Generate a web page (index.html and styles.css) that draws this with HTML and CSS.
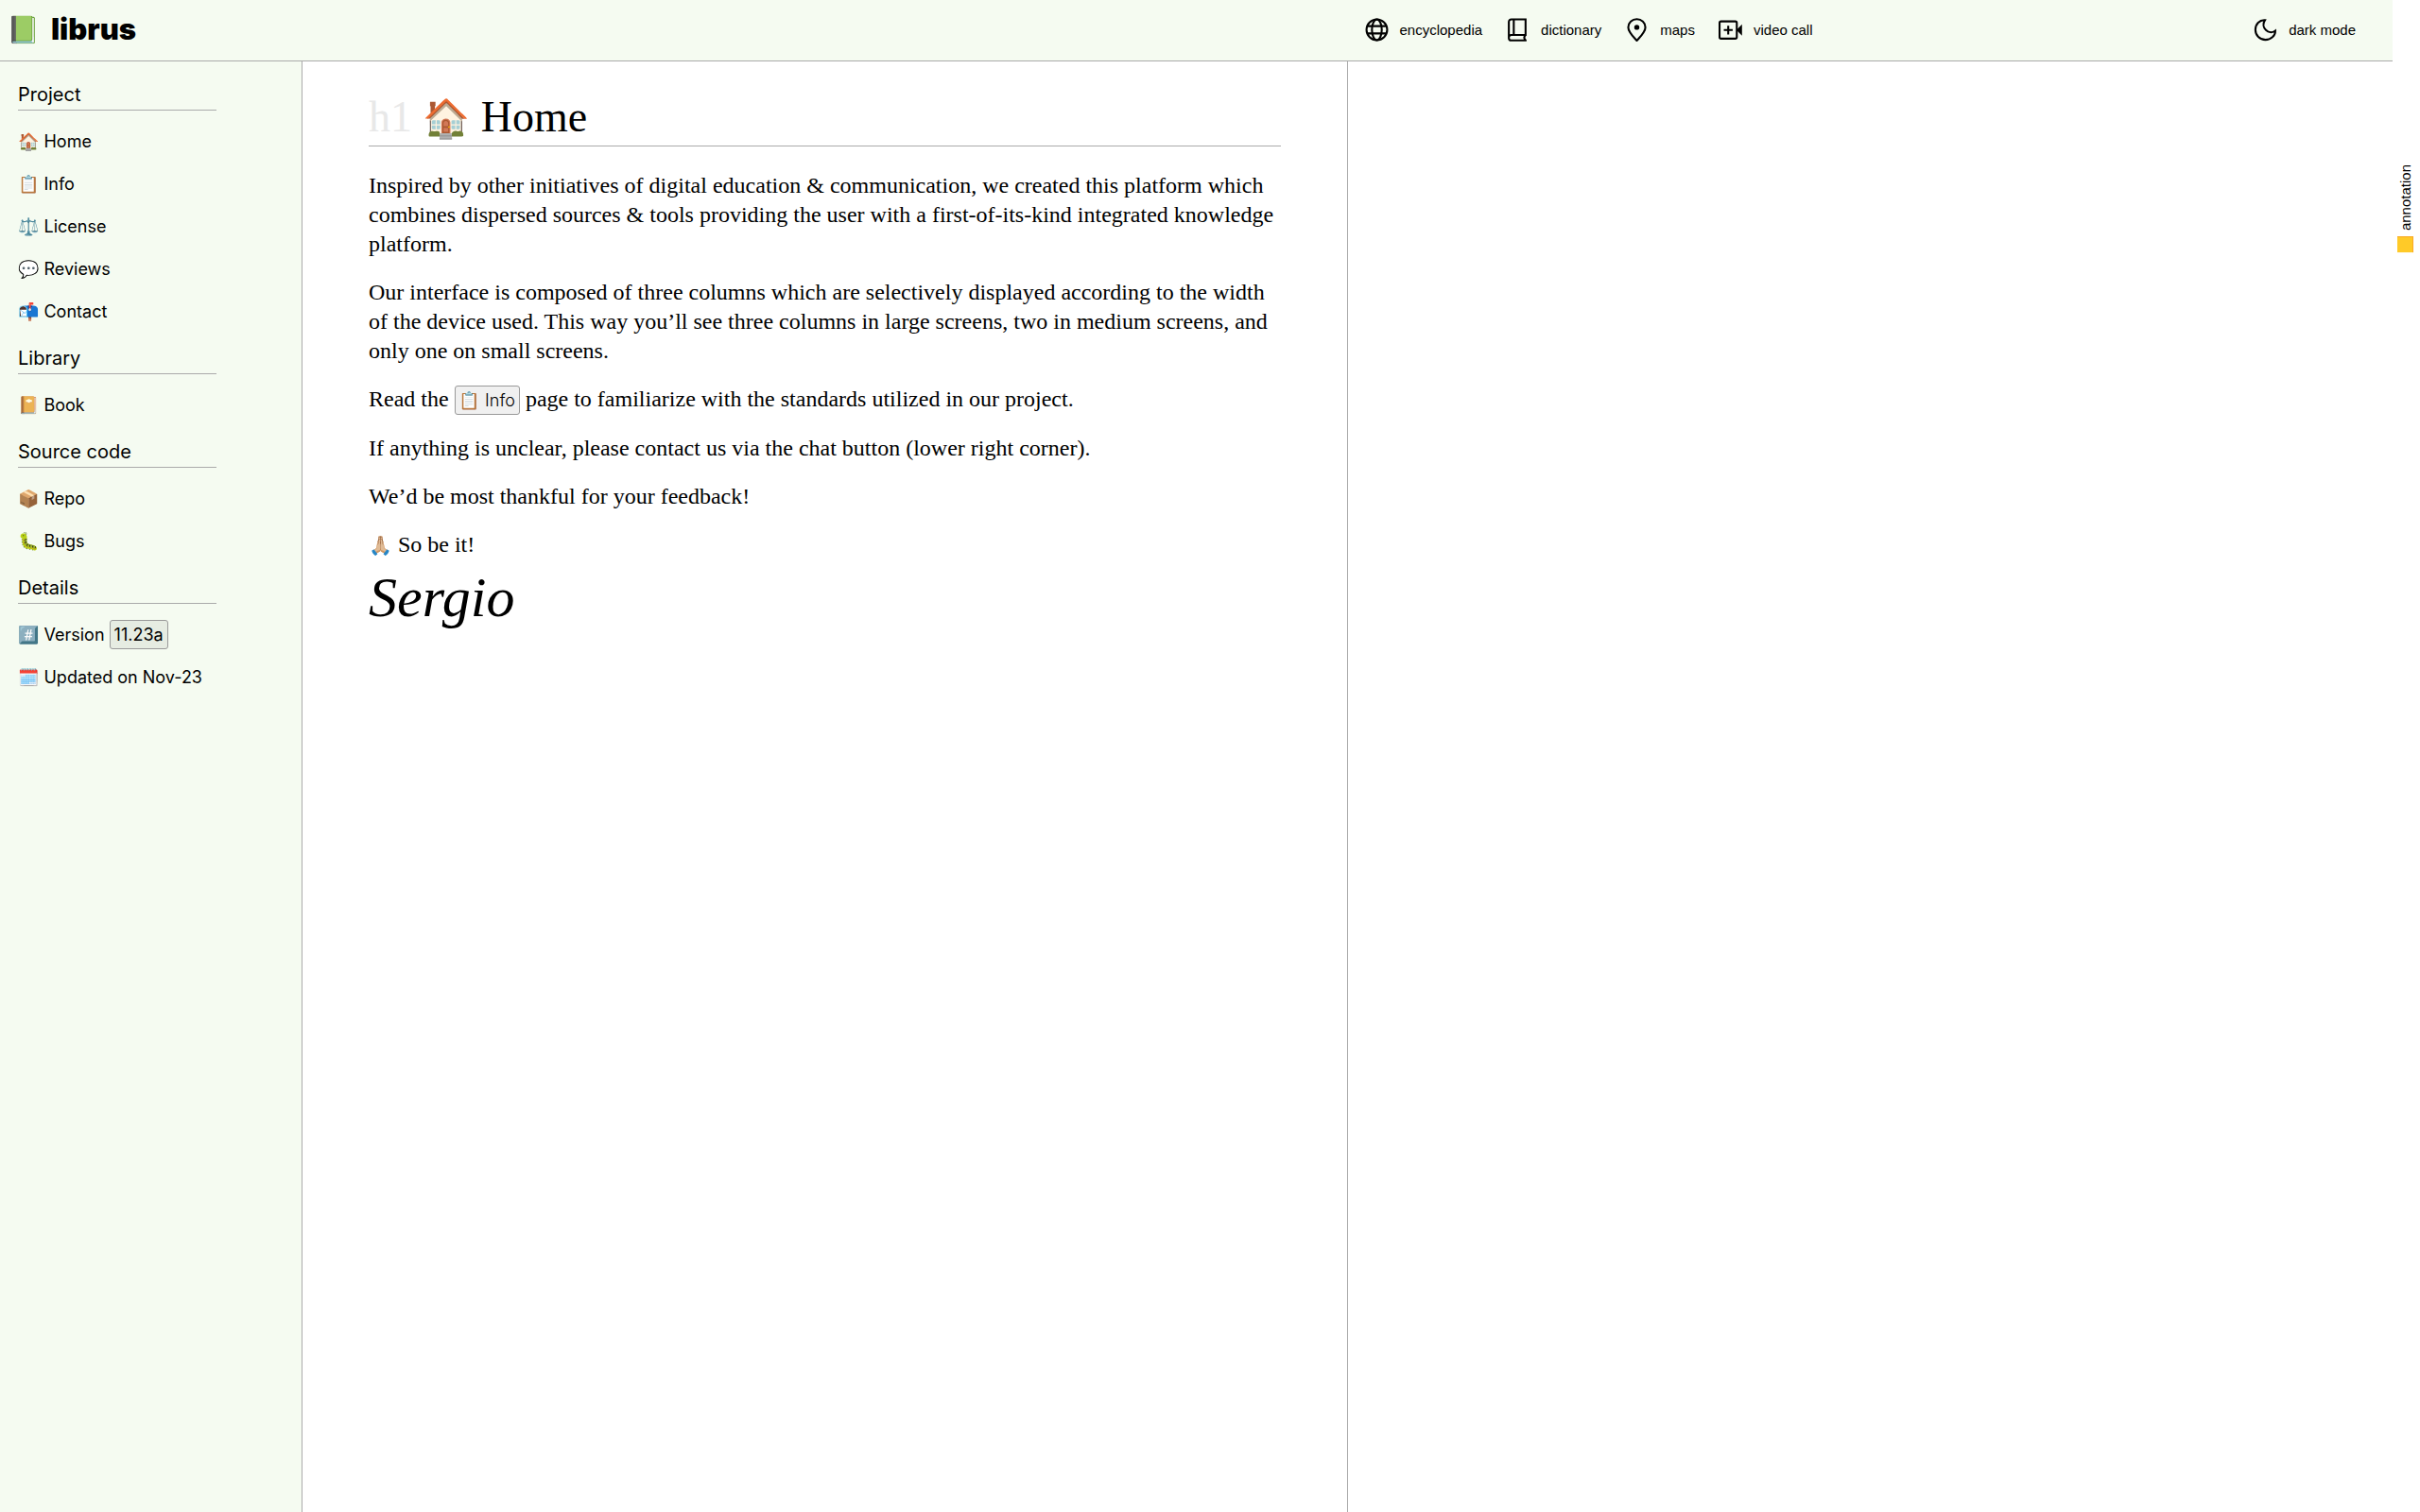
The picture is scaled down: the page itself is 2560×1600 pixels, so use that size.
FILE: index.html
```html
<!DOCTYPE html>
<html lang="en">
<head>
<meta charset="utf-8">
<meta name="viewport" content="width=device-width, initial-scale=1">
<title>librus</title>
<link rel="stylesheet" href="styles.css">
</head>
<body>
<div class="page">
  <header class="topbar">
    <a class="brand" href="#"><span class="brand-icon">📗</span><span class="brand-name">librus</span></a>
    <div class="tools">
      <nav class="tool-list" aria-label="Tools">
        <button class="tool" type="button">
          <svg class="icon" viewBox="0 0 24 24"><circle cx="12" cy="12" r="10.5"/><ellipse cx="12" cy="12" rx="5" ry="10.5"/><path d="M2.5 8.3h19M2.5 15.7h19"/></svg>
          encyclopedia
        </button>
        <button class="tool" type="button">
          <svg class="icon" viewBox="0 0 24 24"><path d="M21 22.8H5.5a2.5 2.5 0 0 1-2.5-2.5V4a2.5 2.5 0 0 1 2.5-2.5H20v15.8H5.5a2.6 2.6 0 0 0-2.5 2.6M8 1.5v15.8M20 17.3c-1.6 1.6-1.6 3.8 0 5.5"/></svg>
          dictionary
        </button>
        <button class="tool" type="button">
          <svg class="icon" viewBox="0 0 24 24"><path d="M12 23C7.500 18 3.300 14 3.300 9.500a8.700 8.300 0 0 1 17.400 0C20.700 14 16.500 18 12 23z"/><circle class="fill" cx="12" cy="9.500" r="1.600"/></svg>
          maps
        </button>
        <button class="tool" type="button">
          <svg class="icon" viewBox="0 0 24 24"><rect x="1" y="3.500" width="17.500" height="17.500" rx="1.500"/><path d="M9.800 7.800v9M5.300 12.300h9"/><path class="fill" d="M19.500 12.300 22.800 9v6.600z"/></svg>
          video call
        </button>
      </nav>
      <button class="tool" type="button">
        <svg class="icon" viewBox="0 0 24 24"><path d="M11.500 2.200C6 1.800 1.800 6.500 1.800 12c0 5.700 4.500 10.200 10.200 10.200 5.500 0 10.200-4.200 10-9.200C15.500 18 6.500 9.500 11.500 2.200z"/></svg>
        dark mode
      </button>
    </div>
  </header>

  <nav class="sidebar" aria-label="Site">
    <h2>Project</h2>
    <ul>
      <li><a href="#">🏠 Home</a></li>
      <li><a href="#">📋 Info</a></li>
      <li><a href="#">⚖️ License</a></li>
      <li><a href="#">💬 Reviews</a></li>
      <li><a href="#">📬 Contact</a></li>
    </ul>
    <h2>Library</h2>
    <ul>
      <li><a href="#">📔 Book</a></li>
    </ul>
    <h2>Source code</h2>
    <ul>
      <li><a href="#">📦 Repo</a></li>
      <li><a href="#">🐛 Bugs</a></li>
    </ul>
    <h2>Details</h2>
    <ul>
      <li>#️⃣ Version <span class="chip">11.23a</span></li>
      <li>🗓️ Updated on Nov-23</li>
    </ul>
  </nav>

  <main class="content">
    <h1><span class="level">h1</span> <span class="title-emoji">🏠</span> Home</h1>
    <p>Inspired by other initiatives of digital education &amp; communication, we created this platform which combines dispersed sources &amp; tools providing the user with a first-of-its-kind integrated knowledge platform.</p>
    <p>Our interface is composed of three columns which are selectively displayed according to the width of the device used. This way you’ll see three columns in large screens, two in medium screens, and only one on small screens.</p>
    <p>Read the <a class="chip" href="#">📋 Info</a> page to familiarize with the standards utilized in our project.</p>
    <p>If anything is unclear, please contact us via the chat button (lower right corner).</p>
    <p>We’d be most thankful for your feedback!</p>
    <p><span class="text-emoji">🙏🏼</span> So be it!</p>
    <div class="signature">Sergio</div>
  </main>

  <section class="reader" aria-label="Reader"></section>

  <aside class="gutter">
    <button class="annotation" type="button"><span class="note"></span>annotation</button>
  </aside>
</div>
</body>
</html>
```
FILE: styles.css
```css
* { box-sizing: border-box; }

body {
  margin: 0;
  background: #fff;
  color: #000;
  font-family: Inter, "Noto Color Emoji", sans-serif;
  font-size: 18px;
}

a { color: inherit; text-decoration: none; }

button {
  padding: 0;
  border: 0;
  background: none;
  color: inherit;
  font: 15px "Liberation Sans", sans-serif;
}

.page {
  display: grid;
  grid-template-areas:
    "top top top gutter"
    "side content reader gutter";
  grid-template-columns: 320px 1fr 1fr 29px;
  grid-template-rows: 65px 1fr;
  min-height: 100vh;
}

.topbar {
  grid-area: top;
  display: grid;
  grid-template-columns: subgrid;
  align-items: center;
  padding-bottom: 2px;
  background: #f5fbf1;
  border-bottom: 1px solid #aaa;
}

.brand {
  grid-column: 1 / 3;
  display: flex;
  align-items: center;
  gap: 12px;
  padding-left: 7px;
}

.brand-icon { font-size: 28px; line-height: 40px; }
.brand-name { font: 900 31px/40px Inter, sans-serif; }

.tools {
  display: flex;
  justify-content: space-between;
  padding: 0 39px 0 18px;
}

.tool-list { display: flex; gap: 25px; }

.tool {
  display: flex;
  align-items: center;
  gap: 12px;
}

.icon {
  width: 25px;
  height: 25px;
  fill: none;
  stroke: #000;
  stroke-width: 2;
}

.icon .fill { fill: #000; }

.sidebar {
  grid-area: side;
  padding: 8px 19px;
  background: #f5fbf1;
  border-right: 1px solid #aaa;
}

.sidebar h2 {
  width: 210px;
  height: 44px;
  margin: 0 0 10px;
  padding-top: 12px;
  border-bottom: 1px solid #aaa;
  font-size: 20px;
  font-weight: 400;
  line-height: 30px;
}

.sidebar ul {
  margin: 0;
  padding: 0;
  list-style: none;
}

.sidebar li { line-height: 45px; }

.chip {
  display: inline-block;
  padding: 0 4px;
  border: 1px solid #999;
  border-radius: 3px;
  background: rgba(0, 0, 0, 0.06);
  font-family: Inter, "Noto Color Emoji", sans-serif;
  font-size: 18px;
  line-height: 29px;
}

.content {
  grid-area: content;
  padding: 30px 70px;
  border-right: 1px solid #aaa;
  font: 300 24px/31px "Roboto Slab", "Liberation Serif", "Noto Color Emoji", serif;
}

.content h1 {
  height: 60px;
  margin: 0 0 26px;
  border-bottom: 1px solid #aaa;
  font-size: 46px;
  font-weight: 400;
  line-height: 58px;
}

.level { color: #e8e8e8; }

.title-emoji { font-size: 40px; line-height: 40px; }

.text-emoji { font-size: 20px; line-height: 20px; }

.content p { margin: 0 0 20px; }

.signature {
  margin-top: -20px;
  font-size: 60px;
  font-style: italic;
  line-height: 80px;
}

.reader { grid-area: reader; }

.gutter {
  grid-area: gutter;
  padding-top: 174px;
}

.annotation {
  display: flex;
  align-items: center;
  gap: 6px;
  margin-left: 5px;
  writing-mode: vertical-rl;
  transform: rotate(180deg);
}

.note {
  width: 17px;
  height: 17px;
  background: #ffca28;
  border-left: 1px solid #f9a825;
  border-bottom: 1px solid #f9a825;
}
```
